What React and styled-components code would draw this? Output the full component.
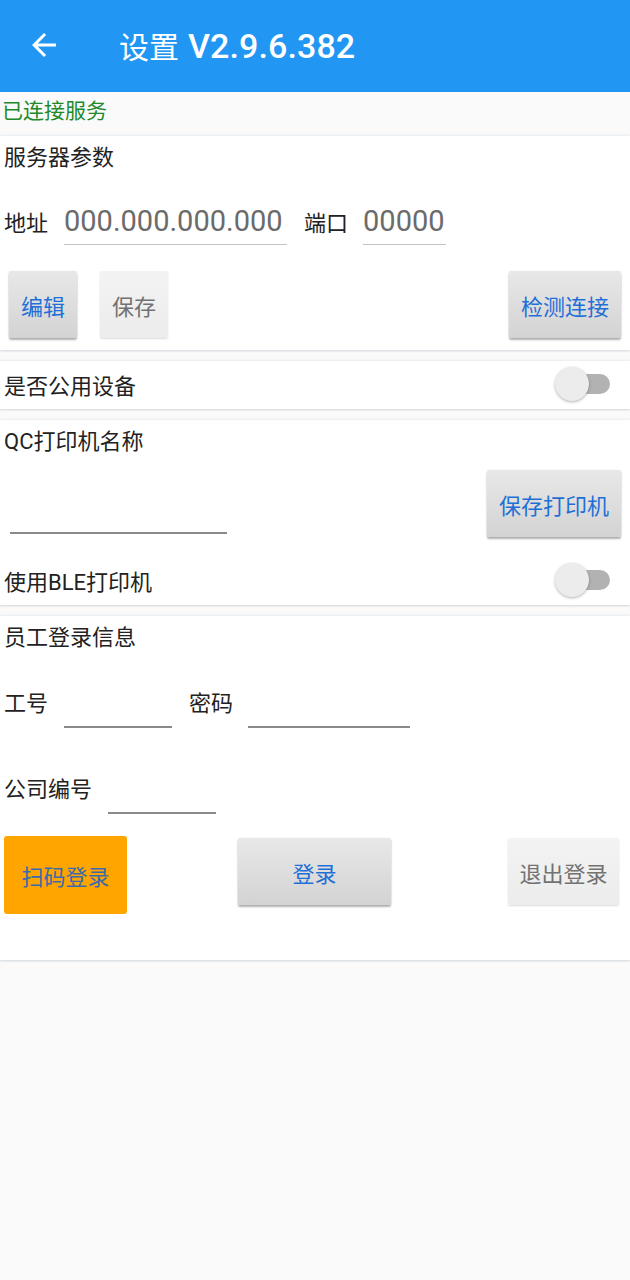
import React from 'react';
import styled, { createGlobalStyle } from 'styled-components';

const GlobalStyle = createGlobalStyle`
  html, body {
    margin: 0;
    padding: 0;
    background: #fafafa;
  }
  body {
    font-family: Roboto, 'Noto Sans CJK SC', sans-serif;
    color: #222;
  }
  * {
    box-sizing: border-box;
  }
`;

const Page = styled.div`
  width: 630px;
  min-height: 1280px;
  background: #fafafa;
`;

const Toolbar = styled.header`
  height: 92px;
  background: #2196f3;
  display: flex;
  align-items: center;
  padding-left: 26px;
  color: #fff;

  svg {
    width: 36px;
    height: 36px;
    margin-top: -3px;
  }
`;

const Title = styled.h1`
  margin: -2px 0 0 57px;
  font-size: 30px;
  font-weight: 400;
  display: flex;
  align-items: baseline;
  gap: 9px;
`;

const Version = styled.span`
  font-family: Roboto, sans-serif;
  font-size: 34px;
  font-weight: 500;
  letter-spacing: 0.1px;
`;

const Status = styled.div`
  height: 44px;
  padding: 6px 0 0 2px;
  font-size: 21px;
  line-height: 26px;
  color: #22892a;
`;

const Card = styled.section`
  background: #fff;
  margin: 0 0 11px;
  padding: ${(p) => p.$pad || '0 4px'};
  box-shadow: 0 1px 2px rgba(0, 0, 0, 0.1), 0 0 3px rgba(120, 160, 200, 0.25);
`;

const CardTitle = styled.div`
  height: 44px;
  line-height: 44px;
  font-size: 22px;
`;

const Row = styled.div`
  display: flex;
  align-items: ${(p) => p.$align || 'center'};
  justify-content: ${(p) => p.$justify || 'flex-start'};
  height: ${(p) => p.$h || 'auto'};
  margin-top: ${(p) => p.$mt || 0};
  padding: ${(p) => p.$pad || 0};
`;

const Label = styled.span`
  font-size: 22px;
  margin: ${(p) => p.$m || '0 18px 0 0'};
  white-space: nowrap;
`;

const Field = styled.input`
  width: ${(p) => p.$w};
  height: ${(p) => p.$h || '46px'};
  border: 0;
  border-bottom: ${(p) => (p.$light ? '1.5px solid #c4c4c4' : '2px solid #8a8a8a')};
  border-radius: 0;
  background: transparent;
  font-family: Roboto, sans-serif;
  font-size: 29px;
  color: #6b6b6b;
  padding: 0;
  margin: ${(p) => p.$m || 0};
  outline: none;
`;

const Button = styled.button`
  height: ${(p) => p.$h || '67px'};
  width: ${(p) => p.$w || 'auto'};
  padding: 0;
  margin: ${(p) => p.$m || 0};
  border: 0;
  border-radius: 2px;
  white-space: nowrap;
  font-family: Roboto, 'Noto Sans CJK SC', sans-serif;
  font-size: 22px;
  color: ${(p) => (p.$disabled ? '#727272' : '#1f6fd6')};
  background: ${(p) =>
    p.$disabled
      ? 'linear-gradient(#f3f3f3, #ececec)'
      : 'linear-gradient(#e8e8e8, #d3d3d3)'};
  box-shadow: ${(p) =>
    p.$disabled
      ? '0 1px 2px rgba(0, 0, 0, 0.14)'
      : '0 2px 2px rgba(0, 0, 0, 0.3), 0 0 1px rgba(0, 0, 0, 0.2)'};
`;

const ScanButton = styled.button`
  height: 78px;
  width: 123px;
  padding: 0;
  border: 0;
  border-radius: 3px;
  background: #ffa500;
  color: #3d6aa8;
  white-space: nowrap;
  font-family: Roboto, 'Noto Sans CJK SC', sans-serif;
  font-size: 22px;
`;

const Switch = styled.div`
  position: relative;
  width: 55px;
  height: 34px;
  margin-right: 16px;

  &::before {
    content: '';
    position: absolute;
    left: 20px;
    right: 0;
    top: 7px;
    height: 20px;
    border-radius: 10px;
    background: #b2b2b2;
  }

  &::after {
    content: '';
    position: absolute;
    left: 0;
    top: 0;
    width: 34px;
    height: 34px;
    border-radius: 50%;
    background: #ececec;
    box-shadow: 0 1px 3px rgba(0, 0, 0, 0.3);
  }
`;

const BackArrow = () => (
  <svg viewBox='0 0 24 24' fill='#fff'>
    <path d='M20 11H7.83l5.59-5.59L12 4l-8 8 8 8 1.41-1.41L7.83 13H20v-2z' />
  </svg>
);

const App = () => {
  return (
    <Page>
      <GlobalStyle />
      <Toolbar>
        <BackArrow />
        <Title>
          设置<Version>V2.9.6.382</Version>
        </Title>
      </Toolbar>

      <Status>已连接服务</Status>

      <Card $pad='0 4px 12px'>
        <CardTitle>服务器参数</CardTitle>
        <Row $mt='16px' $h='50px'>
          <Label $m='0 16px 0 0'>地址</Label>
          <Field $light $w='223px' $h='48px' readOnly defaultValue='000.000.000.000' />
          <Label $m='0 15px 0 17px'>端口</Label>
          <Field $light $w='83px' $h='48px' readOnly defaultValue='00000' />
        </Row>
        <Row $mt='25px' $justify='space-between' $pad='0 5px'>
          <Row>
            <Button $w='68px'>编辑</Button>
            <Button $w='68px' $disabled $m='0 0 0 23px'>保存</Button>
          </Row>
          <Button $w='112px'>检测连接</Button>
        </Row>
      </Card>

      <Card>
        <Row $h='48px' $pad='0 0 2px' $justify='space-between'>
          <Label>是否公用设备</Label>
          <Switch />
        </Row>
      </Card>

      <Card $pad='0 4px 1px'>
        <CardTitle>QC打印机名称</CardTitle>
        <Row $mt='6px' $align='flex-end' $justify='space-between' $pad='0 5px 0 6px'>
          <Field $w='217px' $m='0 0 3px' readOnly />
          <Button $w='134px'>保存打印机</Button>
        </Row>
        <Row $mt='19px' $h='48px' $justify='space-between'>
          <Label>使用BLE打印机</Label>
          <Switch />
        </Row>
      </Card>

      <Card $pad='0 4px 46px'>
        <CardTitle>员工登录信息</CardTitle>
        <Row $mt='14px' $h='54px'>
          <Label $m='0 16px 0 0'>工号</Label>
          <Field $w='108px' $h='54px' readOnly />
          <Label $m='0 15px 0 17px'>密码</Label>
          <Field $w='162px' $h='54px' readOnly />
        </Row>
        <Row $mt='32px' $h='54px'>
          <Label $m='0 16px 0 0'>公司编号</Label>
          <Field $w='108px' $h='54px' readOnly />
        </Row>
        <Row $mt='22px' $align='flex-start' $pad='0 7px 0 0'>
          <ScanButton>扫码登录</ScanButton>
          <Button $w='153px' $m='2px 0 0 111px'>登录</Button>
          <Button $w='111px' $disabled $m='2px 0 0 auto'>退出登录</Button>
        </Row>
      </Card>
    </Page>
  );
};

export default App;
